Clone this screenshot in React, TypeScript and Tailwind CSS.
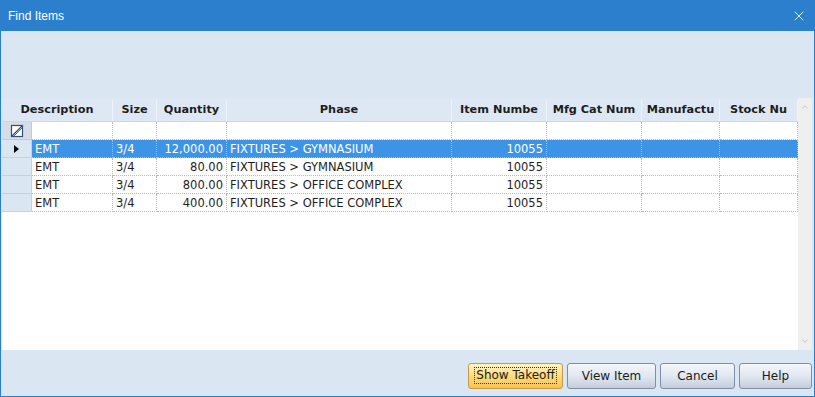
import { X, ChevronUp, ChevronDown } from "lucide-react";

type Row = { desc: string; size: string; qty: string; phase: string; item: string };

const ROWS: Row[] = [
  { desc: "EMT", size: "3/4", qty: "12,000.00", phase: "FIXTURES > GYMNASIUM", item: "10055" },
  { desc: "EMT", size: "3/4", qty: "80.00", phase: "FIXTURES > GYMNASIUM", item: "10055" },
  { desc: "EMT", size: "3/4", qty: "800.00", phase: "FIXTURES > OFFICE COMPLEX", item: "10055" },
  { desc: "EMT", size: "3/4", qty: "400.00", phase: "FIXTURES > OFFICE COMPLEX", item: "10055" },
];

// column widths after the 30px row indicator
const COLS = [
  { w: "w-[81px]", align: "text-left" },
  { w: "w-[44px]", align: "text-left" },
  { w: "w-[70px]", align: "text-right" },
  { w: "w-[225px]", align: "text-left" },
  { w: "w-[95px]", align: "text-right" },
  { w: "w-[95px]", align: "text-left" },
  { w: "w-[78px]", align: "text-left" },
  { w: "w-[78px]", align: "text-left" },
];

const cell = "h-[18px] shrink-0 border-r border-b border-dotted border-[#b9b9b9] px-[3px] leading-[18px] whitespace-nowrap overflow-hidden";

function FilterIcon() {
  return (
    <svg width="14" height="14" viewBox="0 0 14 14">
      <rect x="1.5" y="1.5" width="11" height="11" fill="white" stroke="#2d4f7c" strokeWidth="1.2" />
      <line x1="2" y1="12" x2="12" y2="2" stroke="#2d4f7c" strokeWidth="1.2" />
      <line x1="4" y1="12" x2="12" y2="4" stroke="#2d4f7c" strokeWidth="0.8" />
    </svg>
  );
}

function Btn({ label, w, focused }: { label: string; w: string; focused?: boolean }) {
  const base = focused
    ? "border-[#c29b4e] bg-gradient-to-b from-[#fff3c4] via-[#fddc7c] to-[#f6c350]"
    : "border-[#7f8fa3] bg-gradient-to-b from-[#f3f6fa] via-[#e1e8f1] to-[#c3cedb]";
  return (
    <button className={`${w} h-[26px] rounded-[3px] border ${base} text-[12px] text-[#1b1b1b] flex items-center justify-center`}>
      {focused ? (
        <span className="border border-dotted border-[#333] px-[1px] leading-[15px]">{label}</span>
      ) : (
        label
      )}
    </button>
  );
}

export default function App() {
  const headers = ["Size", "Quantity", "Phase", "Item Numbe", "Mfg Cat Num", "Manufactu", "Stock Nu"];
  return (
    <div className="w-[815px] h-[397px] flex flex-col bg-[#2b7fcc] font-['DejaVu_Sans',sans-serif] text-[11.5px] text-[#1e1e1e] overflow-hidden">
      {/* Title bar */}
      <div className="h-[31px] shrink-0 flex items-center justify-between pl-[8px] pr-[8px] text-white">
        <span className="font-['Liberation_Sans',Arial,sans-serif] text-[12px]">Find Items</span>
        <X className="w-[16px] h-[16px]" strokeWidth={1.3} />
      </div>

      {/* Body */}
      <div className="flex-1 mx-[1px] mb-[1px] bg-[#dbe6f3] flex flex-col">
        <div className="h-[67px] shrink-0" />

        {/* Grid */}
        <div className="h-[252px] shrink-0 ml-[1px] mr-[2px] flex bg-white">
          <div className="w-[796px] flex flex-col">
            {/* Header */}
            <div className="h-[24px] flex bg-[#dde8f4] border-b border-[#c9d6e6] font-bold text-[11.3px] pt-[2px]">
              <div className="w-[111px] shrink-0 flex items-center justify-center border-r border-[#eef3f9]">Description</div>
              {headers.map((h, i) => (
                <div
                  key={h}
                  className={`${COLS[i + 1].w} shrink-0 flex items-center justify-center border-r border-[#eef3f9] whitespace-nowrap overflow-hidden`}
                >
                  {h}
                </div>
              ))}
            </div>

            {/* Filter row */}
            <div className="flex">
              <div className="w-[30px] h-[18px] shrink-0 border-r border-b border-[#bccbdd] bg-[#d6dde6] flex items-center justify-center">
                <FilterIcon />
              </div>
              {COLS.map((c, i) => (
                <div key={i} className={`${c.w} ${cell}`} />
              ))}
            </div>

            {/* Data rows */}
            {ROWS.map((r, idx) => {
              const sel = idx === 0;
              const vals = [r.desc, r.size, r.qty, r.phase, r.item, "", "", ""];
              return (
                <div key={idx} className="flex">
                  <div className="w-[30px] h-[18px] shrink-0 border-r border-b border-[#c3d2e3] bg-[#dbe6f3] flex items-center justify-center">
                    {sel && <div className="w-0 h-0 border-y-[4px] border-y-transparent border-l-[5px] border-l-black" />}
                  </div>
                  {COLS.map((c, i) => (
                    <div
                      key={i}
                      className={`${c.w} ${cell} ${c.align} ${sel ? "bg-[#3d94e6] text-white border-[#8ebdea]" : ""}`}
                    >
                      {vals[i]}
                    </div>
                  ))}
                </div>
              );
            })}
          </div>

          {/* Scrollbar */}
          <div className="w-[14px] shrink-0 bg-[#efefef] flex flex-col justify-between items-center py-[4px] text-[#b8b8b8]">
            <ChevronUp className="w-[10px] h-[10px]" strokeWidth={2} />
            <ChevronDown className="w-[10px] h-[10px]" strokeWidth={2} />
          </div>
        </div>

        {/* Footer buttons */}
        <div className="flex-1 flex items-center justify-end gap-[4px] pr-[2px] pt-[5px]">
          <Btn label="Show Takeoff" w="w-[95px]" focused />
          <Btn label="View Item" w="w-[89px]" />
          <Btn label="Cancel" w="w-[75px]" />
          <Btn label="Help" w="w-[73px]" />
        </div>
      </div>
    </div>
  );
}
